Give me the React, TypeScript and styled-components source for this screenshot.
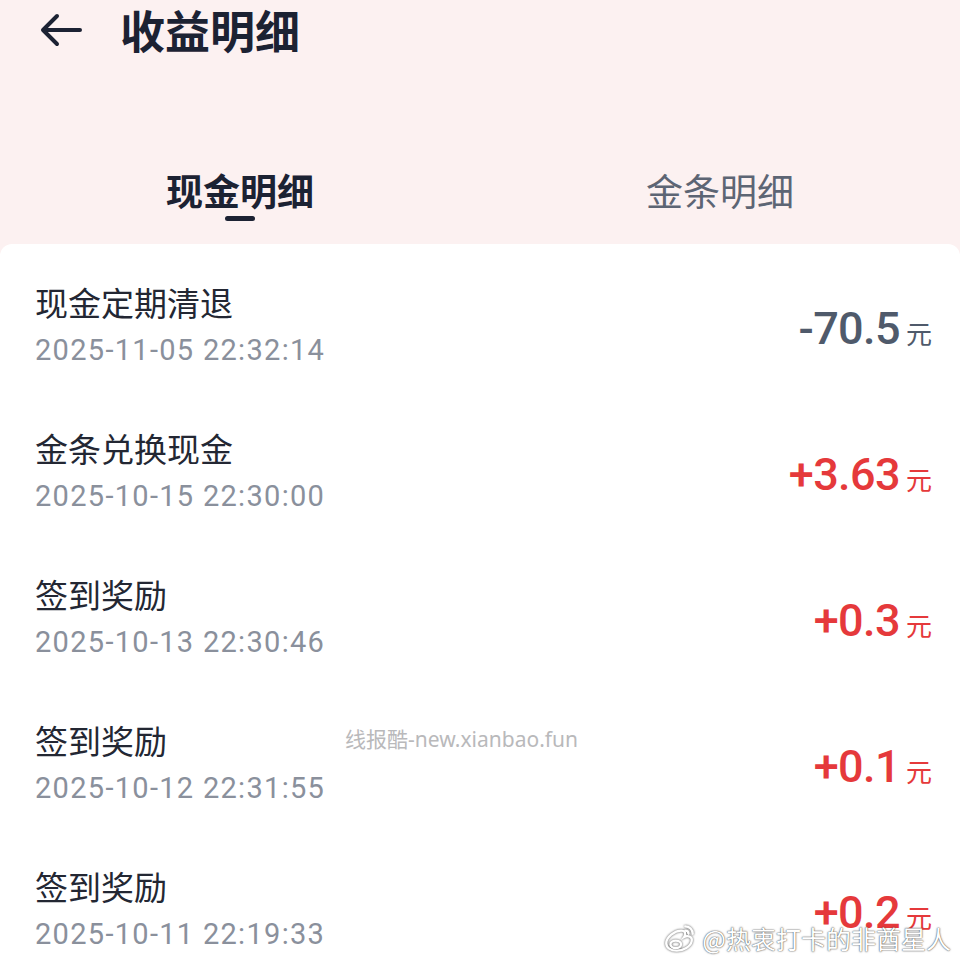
import React from "react";
import styled, { createGlobalStyle } from "styled-components";

const Global = createGlobalStyle`
  html, body { margin: 0; padding: 0; background: #fcf1f1; }
  body { font-family: Roboto, "Noto Sans CJK SC", sans-serif; }
`;

const Page = styled.div`
  position: relative;
  width: 960px;
  height: 960px;
  overflow: hidden;
  background: #fcf1f1;
  display: flex;
  flex-direction: column;
`;

const Header = styled.div`
  flex-shrink: 0;
  height: 60px;
  display: flex;
  align-items: center;
  padding-left: 40px;
  gap: 38px;
`;

const BackButton = styled.div`
  width: 42px;
  height: 34px;
  display: flex;
  align-items: center;
`;

const Title = styled.div`
  font-family: "Noto Sans CJK SC", sans-serif;
  font-size: 45px;
  font-weight: 700;
  color: #1c2233;
  line-height: 1.2;
`;

const TabBar = styled.div`
  flex-shrink: 0;
  display: grid;
  grid-template-columns: 1fr 1fr;
  padding-top: 105px;
  height: 184px;
  box-sizing: border-box;
`;

const Tab = styled.div`
  display: flex;
  flex-direction: column;
  align-items: center;
`;

const TabLabel = styled.div<{ $active?: boolean }>`
  font-family: "Noto Sans CJK SC", sans-serif;
  font-size: 37px;
  line-height: 50px;
  font-weight: ${(p) => (p.$active ? 700 : 400)};
  color: ${(p) => (p.$active ? "#1c2233" : "#5d6574")};
`;

const Indicator = styled.div`
  width: 30px;
  height: 5px;
  border-radius: 3px;
  background: #1c2233;
  margin-top: 1px;
`;

const Card = styled.div`
  flex-shrink: 0;
  flex-grow: 1;
  background: #ffffff;
  border-radius: 12px 12px 0 0;
  padding-top: 28px;
`;

const Row = styled.div`
  height: 146px;
  box-sizing: border-box;
  padding: 8px 28px 42px 35px;
  display: flex;
  align-items: center;
  justify-content: space-between;
`;

const Info = styled.div`
  display: flex;
  flex-direction: column;
`;

const RowTitle = styled.div`
  font-family: "Noto Sans CJK SC", sans-serif;
  font-size: 33px;
  line-height: 44px;
  color: #232733;
`;

const RowDate = styled.div`
  font-family: Roboto, sans-serif;
  font-size: 29px;
  line-height: 52px;
  color: #8a909c;
  letter-spacing: 1.3px;
`;

const Amount = styled.div<{ $positive: boolean }>`
  display: flex;
  align-items: baseline;
  color: ${(p) => (p.$positive ? "#e5393b" : "#4f5a6b")};
  margin-top: 0px;
`;

const AmountValue = styled.span`
  font-family: Roboto, sans-serif;
  font-size: 45px;
  font-weight: 500;
  letter-spacing: -0.6px;
`;

const Unit = styled.span`
  font-family: "Noto Sans CJK SC", sans-serif;
  font-size: 26px;
  margin-left: 6px;
`;

const Watermark = styled.div`
  position: absolute;
  left: 345px;
  top: 723px;
  font-family: "Noto Sans", "Noto Sans CJK SC", sans-serif;
  font-size: 21px;
  color: #b9b9bb;
  white-space: nowrap;
`;

const Weibo = styled.div`
  position: absolute;
  right: 9px;
  bottom: 4px;
  display: flex;
  align-items: center;
  gap: 4px;
  font-family: "Noto Sans CJK SC", sans-serif;
  font-size: 25px;
  color: #ffffff;
  text-shadow: 0 0 2px rgba(60, 60, 60, 0.75), 0 0 1px rgba(60, 60, 60, 0.9);
  white-space: nowrap;
`;

const records = [
  { title: "现金定期清退", date: "2025-11-05 22:32:14", amount: "-70.5" },
  { title: "金条兑换现金", date: "2025-10-15 22:30:00", amount: "+3.63" },
  { title: "签到奖励", date: "2025-10-13 22:30:46", amount: "+0.3" },
  { title: "签到奖励", date: "2025-10-12 22:31:55", amount: "+0.1" },
  { title: "签到奖励", date: "2025-10-11 22:19:33", amount: "+0.2" },
];

const BackArrow = () => (
  <svg width="42" height="34" viewBox="0 0 42 34" fill="none">
    <path
      d="M40 17H4M17 3L3 17l14 14"
      stroke="#1c2233"
      strokeWidth="4"
      strokeLinecap="round"
      strokeLinejoin="round"
    />
  </svg>
);

const WeiboLogo = () => (
  <svg width="36" height="32" viewBox="0 0 34 30" fill="none">
    <g stroke="#ffffff" strokeWidth="2.2" style={{ filter: "drop-shadow(0 0 1px rgba(60,60,60,0.9))" }}>
      <path d="M4 20c0-6 8-12 14-12 4 0 5 3 3 6 4-2 8 0 7 4-1 5-8 9-14 9-6 0-10-3-10-7z" />
      <ellipse cx="13" cy="21" rx="5" ry="3.5" />
      <path d="M22 4c4 0 7 3 7 7M22 8c2 0 3 1 3 3" strokeLinecap="round" />
    </g>
  </svg>
);

export default function App() {
  return (
    <>
      <Global />
      <Page>
        <Header>
          <BackButton>
            <BackArrow />
          </BackButton>
          <Title>收益明细</Title>
        </Header>
        <TabBar>
          <Tab>
            <TabLabel $active>现金明细</TabLabel>
            <Indicator />
          </Tab>
          <Tab>
            <TabLabel>金条明细</TabLabel>
          </Tab>
        </TabBar>
        <Card>
          {records.map((r, i) => (
            <Row key={i}>
              <Info>
                <RowTitle>{r.title}</RowTitle>
                <RowDate>{r.date}</RowDate>
              </Info>
              <Amount $positive={r.amount.startsWith("+")}>
                <AmountValue>{r.amount}</AmountValue>
                <Unit>元</Unit>
              </Amount>
            </Row>
          ))}
        </Card>
        <Watermark>线报酷-new.xianbao.fun</Watermark>
        <Weibo>
          <WeiboLogo />
          <span>@热衷打卡的非酋星人</span>
        </Weibo>
      </Page>
    </>
  );
}
